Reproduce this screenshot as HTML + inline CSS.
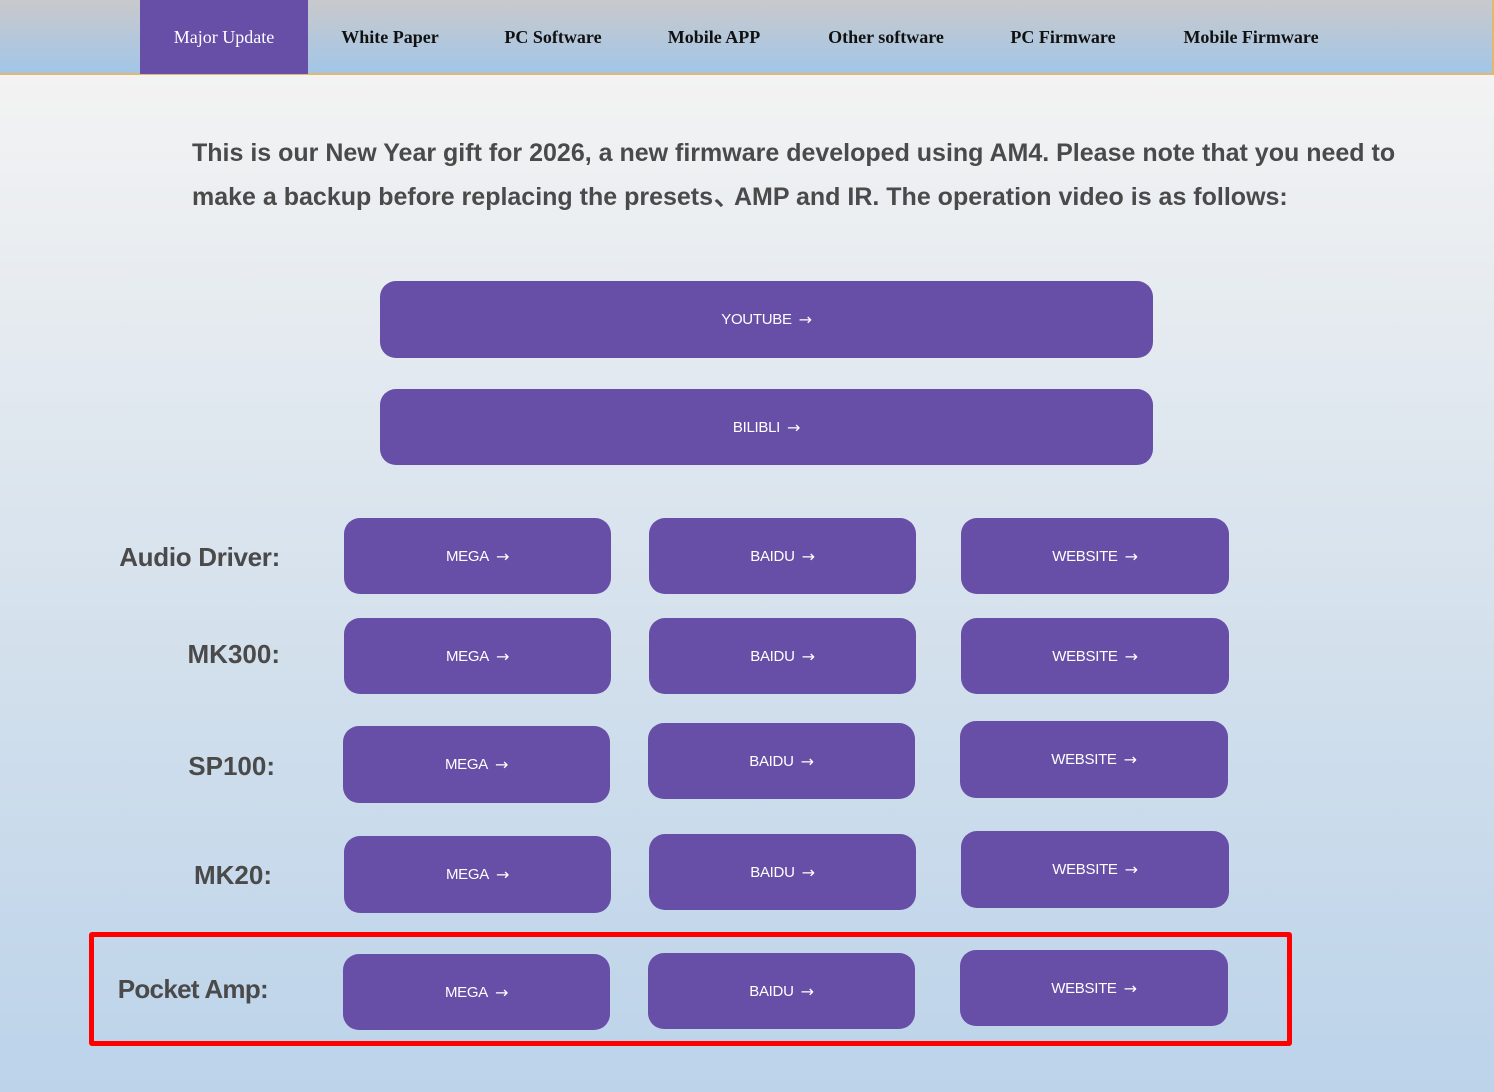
<!DOCTYPE html>
<html><head><meta charset="utf-8"><style>
html,body{margin:0;padding:0}
body{width:1494px;height:1092px;position:relative;overflow:hidden;background:linear-gradient(to bottom,#f3f3f3 74px,#e9edf1 250px,#d3e0ec 650px,#bcd3ea 1092px);font-family:"Liberation Sans",sans-serif}
.nav{position:absolute;left:0;top:0;width:1492px;height:73px;background:linear-gradient(to bottom,#c9c9cb,#a2c6e8);border-bottom:2px solid #e2b870;border-right:2px solid #e2b870}
.nav .act{position:absolute;left:140px;top:0;width:168px;height:74px;background:#674ea7}
.ni{position:absolute;top:27px;font-family:"Liberation Serif",serif;font-weight:bold;font-size:18px;color:#111;transform:translateX(-50%);white-space:nowrap}
.p{position:absolute;left:192px;top:131px;width:1220px;font-weight:bold;font-size:25px;line-height:44px;color:#4a4a4a}
.b{position:absolute;background:#674ea7;border-radius:16px;color:#fff;font-size:15px;display:flex;align-items:center;justify-content:center;letter-spacing:-0.3px}
.b span{margin-left:7px;font-size:16px;font-family:"DejaVu Sans",sans-serif}
.l{position:absolute;font-weight:bold;font-size:26px;color:#4a4a4a;white-space:nowrap;text-align:right}
.red{position:absolute;left:89px;top:932px;width:1193px;height:104px;border:5px solid #f00;border-radius:3px}
</style></head><body>
<div class="nav"><div class="act"></div>
<div class="ni" style="left:224px;color:#fff;font-weight:normal">Major Update</div>
<div class="ni" style="left:390px">White Paper</div>
<div class="ni" style="left:553px">PC Software</div>
<div class="ni" style="left:714px">Mobile APP</div>
<div class="ni" style="left:886px">Other software</div>
<div class="ni" style="left:1063px">PC Firmware</div>
<div class="ni" style="left:1251px">Mobile Firmware</div>
</div>
<div class="p">This is our New Year gift for 2026, a new firmware developed using AM4. Please note that you need to make a backup before replacing the presets<span style="letter-spacing:-6px"> 、 </span>AMP and IR. The operation video is as follows:</div>
<div class="b" style="left:380px;top:281px;width:773px;height:77px">YOUTUBE<span>→</span></div>
<div class="b" style="left:380px;top:389px;width:773px;height:76px">BILIBLI<span>→</span></div>

<div class="l" style="right:1214px;top:542px;letter-spacing:-0.3px">Audio Driver:</div>
<div class="l" style="right:1214px;top:639px">MK300:</div>
<div class="l" style="right:1219px;top:751px">SP100:</div>
<div class="l" style="right:1222px;top:860px">MK20:</div>
<div class="l" style="right:1226px;top:974px;letter-spacing:-0.7px">Pocket Amp:</div>

<div class="b" style="left:344px;top:518px;width:267px;height:76px">MEGA<span>→</span></div>
<div class="b" style="left:649px;top:518px;width:267px;height:76px">BAIDU<span>→</span></div>
<div class="b" style="left:961px;top:518px;width:268px;height:76px">WEBSITE<span>→</span></div>

<div class="b" style="left:344px;top:618px;width:267px;height:76px">MEGA<span>→</span></div>
<div class="b" style="left:649px;top:618px;width:267px;height:76px">BAIDU<span>→</span></div>
<div class="b" style="left:961px;top:618px;width:268px;height:76px">WEBSITE<span>→</span></div>

<div class="b" style="left:343px;top:726px;width:267px;height:77px">MEGA<span>→</span></div>
<div class="b" style="left:648px;top:723px;width:267px;height:76px">BAIDU<span>→</span></div>
<div class="b" style="left:960px;top:721px;width:268px;height:77px">WEBSITE<span>→</span></div>

<div class="b" style="left:344px;top:836px;width:267px;height:77px">MEGA<span>→</span></div>
<div class="b" style="left:649px;top:834px;width:267px;height:76px">BAIDU<span>→</span></div>
<div class="b" style="left:961px;top:831px;width:268px;height:77px">WEBSITE<span>→</span></div>

<div class="b" style="left:343px;top:954px;width:267px;height:76px">MEGA<span>→</span></div>
<div class="b" style="left:648px;top:953px;width:267px;height:76px">BAIDU<span>→</span></div>
<div class="b" style="left:960px;top:950px;width:268px;height:76px">WEBSITE<span>→</span></div>

<div class="red"></div>
</body></html>
